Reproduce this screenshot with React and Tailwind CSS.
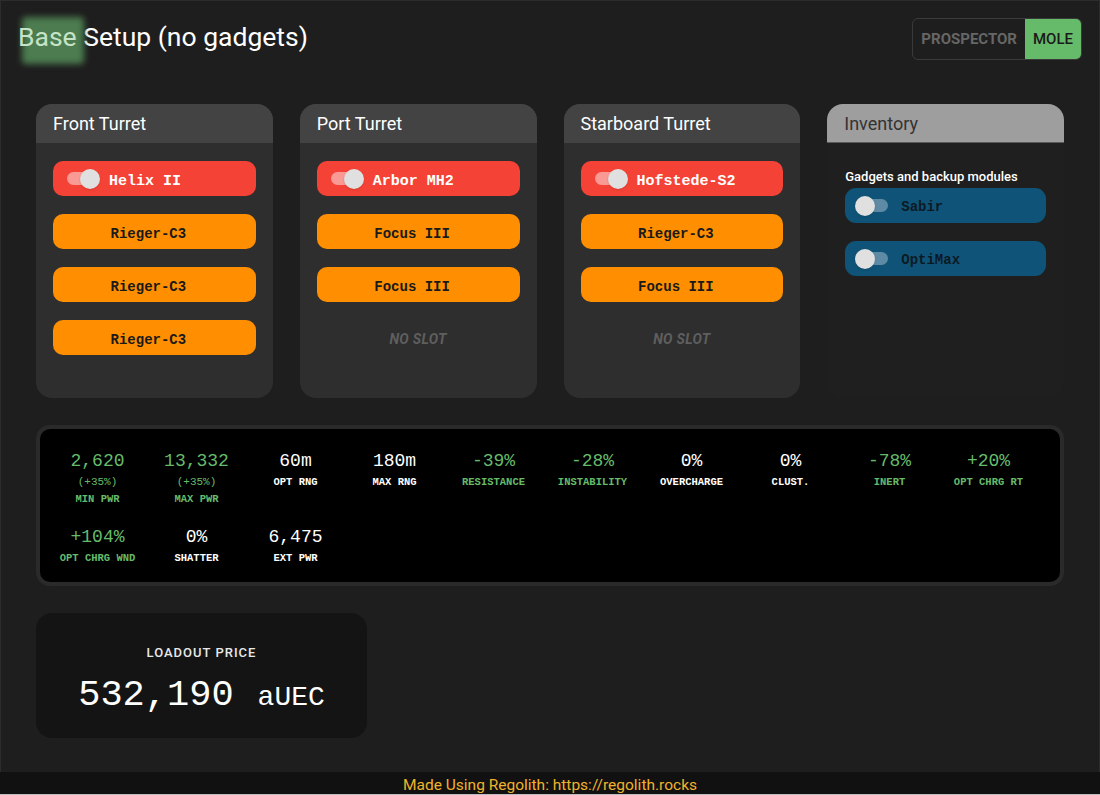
import React from "react";

const mono = "font-['Liberation_Mono','DejaVu_Sans_Mono',monospace]";

const turrets = [
  { name: "Front Turret", laser: "Helix II", modules: ["Rieger-C3", "Rieger-C3", "Rieger-C3"] },
  { name: "Port Turret", laser: "Arbor MH2", modules: ["Focus III", "Focus III", null] },
  { name: "Starboard Turret", laser: "Hofstede-S2", modules: ["Rieger-C3", "Focus III", null] },
];

const stats = [
  { v: "2,620", sub: "(+35%)", l: "MIN PWR", green: true },
  { v: "13,332", sub: "(+35%)", l: "MAX PWR", green: true },
  { v: "60m", l: "OPT RNG" },
  { v: "180m", l: "MAX RNG" },
  { v: "-39%", l: "RESISTANCE", green: true },
  { v: "-28%", l: "INSTABILITY", green: true },
  { v: "0%", l: "OVERCHARGE" },
  { v: "0%", l: "CLUST." },
  { v: "-78%", l: "INERT", green: true },
  { v: "+20%", l: "OPT CHRG RT", green: true },
  { v: "+104%", l: "OPT CHRG WND", green: true },
  { v: "0%", l: "SHATTER" },
  { v: "6,475", l: "EXT PWR" },
];

function Switch({ on }) {
  return (
    <div className="relative w-[32px] h-[20px] flex items-center shrink-0">
      <div className={`w-[30px] h-[13px] rounded-full ${on ? "bg-[#f99a94]" : "bg-[#5e8aa5]"} ml-[1px]`} />
      <div className={`absolute top-0 w-[20px] h-[20px] rounded-full bg-[#e0e0e0] shadow ${on ? "left-[14px]" : "left-[-2px]"}`} />
    </div>
  );
}

function TurretCard({ t }) {
  return (
    <div className="h-[294px] rounded-[16px] overflow-hidden bg-[#2e2e2e] flex flex-col">
      <div className="h-[39px] bg-[#434343] flex items-center px-[17px] text-[18px] text-white">{t.name}</div>
      <div className="flex flex-col gap-[18px] px-[17px] pt-[18px]">
        <div className="h-[35px] rounded-[10px] bg-[#f44336] flex items-center pl-[13px] gap-[11px]">
          <Switch on />
          <span className={`${mono} font-bold text-[15px] text-white pt-[8px]`}>{t.laser}</span>
        </div>
        {t.modules.map((m, i) =>
          m ? (
            <div key={i} className={`h-[35px] rounded-[10px] bg-[#ff8f00] flex items-center justify-center pr-[12px] pt-[5px] ${mono} font-bold text-[14px] text-[#1a1a1a]`}>
              {m}
            </div>
          ) : (
            <div key={i} className="h-[35px] flex items-center justify-center pt-[3px] italic font-bold text-[14px] tracking-wide text-[#5f5f5f]">
              NO SLOT
            </div>
          )
        )}
      </div>
    </div>
  );
}

export default function App() {
  return (
    <div className="bg-[#1e1e1e] font-['Roboto',sans-serif] min-h-[795px] flex flex-col">
      <div className="flex-1 border border-[#2c2c2c] border-b-0">
        <div className="flex items-start justify-between pl-[17px] pr-[17px] pt-[17px] h-[103px]">
          <h1 className="text-[26.5px] text-white leading-[36px] mt-[1px]">
            <span className="relative inline-block">
              <span className="absolute left-[4px] top-[-2px] w-[62px] h-[47px] bg-[#4c7c4f] blur-[3px] rounded" />
              <span className="relative text-[#c5e3c6]">Base</span>
            </span>{" "}
            Setup (no gadgets)
          </h1>
          <div className="flex h-[42px] rounded-[6px] border border-[#3a3a3a] overflow-hidden font-bold">
            <div className="px-[8px] flex items-center text-[15px] text-[#666666]">PROSPECTOR</div>
            <div className="px-[8px] flex items-center bg-[#66bb6a] text-[#1a1a1a] font-medium text-[15px]">MOLE</div>
          </div>
        </div>

        <div className="px-[35px]">
          <div className="grid grid-cols-4 gap-[27px]">
            {turrets.map((t) => (
              <TurretCard key={t.name} t={t} />
            ))}
            <div className="h-[294px] rounded-[16px] overflow-hidden bg-[#1f1f1f] flex flex-col">
              <div className="h-[39px] bg-[#9e9e9e] flex items-center px-[17px] text-[18px] text-[#333333] border-b border-[#5a5a5a]">Inventory</div>
              <div className="px-[18px] pt-[26px]">
                <div className="text-[13px] font-medium text-white leading-[16px] mb-[3px]">Gadgets and backup modules</div>
                <div className="flex flex-col gap-[18px]">
                  {["Sabir", "OptiMax"].map((g) => (
                    <div key={g} className="h-[35px] rounded-[11px] bg-[#0f5478] flex items-center pl-[12px] gap-[12px]">
                      <Switch />
                      <span className={`${mono} font-bold text-[14px] text-[#0c1a24] pt-[4px]`}>{g}</span>
                    </div>
                  ))}
                </div>
              </div>
            </div>
          </div>

          <div className="mt-[27px] rounded-[14px] border-[4px] border-[#2a2a2a] bg-black px-[8px] pt-[20px] pb-[14px] h-[161px]">
            <div className="flex flex-wrap">
              {stats.map((s, i) => (
                <div key={i} className={`w-[99px] flex flex-col items-center ${mono} h-[76px]`}>
                  <div className={`text-[18px] leading-[24px] ${s.green ? "text-[#66bb6a]" : "text-white"}`}>{s.v}</div>
                  {s.sub && <div className="text-[11px] leading-[15px] text-[#66bb6a] mt-[2px]">{s.sub}</div>}
                  <div className={`text-[10.5px] font-bold leading-[16px] mt-[1px] ${s.green ? "text-[#66bb6a]" : "text-white"}`}>{s.l}</div>
                </div>
              ))}
            </div>
          </div>

          <div className="mt-[27px] w-[331px] h-[125px] rounded-[16px] bg-[#141414] flex flex-col items-center pt-[32px]">
            <div className="text-[13px] leading-[16px] font-medium tracking-[1px] text-[#e8e8e8]">LOADOUT PRICE</div>
            <div className={`${mono} text-white mt-[12px] leading-[44px] flex items-baseline`}>
              <span className="text-[37px]">532,190</span>
              <span className="text-[28px] ml-[24px]">aUEC</span>
            </div>
          </div>
        </div>
      </div>
      <div className="h-[23px] bg-[#111111] border-b border-[#bdbdbd] flex items-center justify-center pt-[5px] text-[15.5px] text-[#f0b32c] leading-none">
        Made Using Regolith: https://regolith.rocks
      </div>
    </div>
  );
}
